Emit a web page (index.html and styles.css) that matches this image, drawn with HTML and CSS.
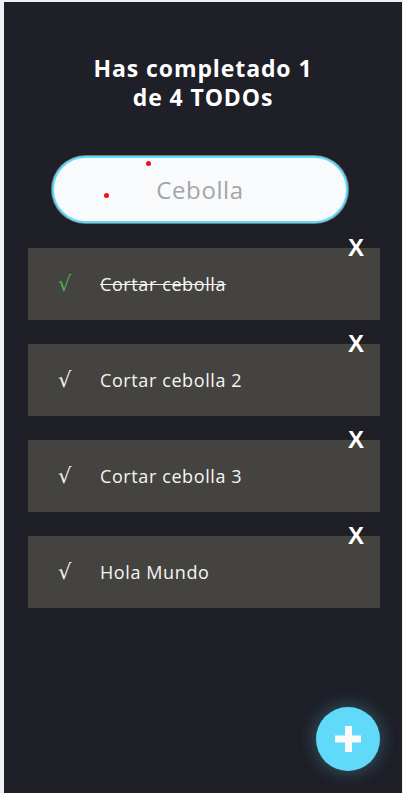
FILE: index.html
```html
<!DOCTYPE html>
<html lang="es">
<head>
<meta charset="utf-8">
<title>TODOs</title>
<link rel="stylesheet" href="styles.css">
</head>
<body>
<div class="app">
  <h1 class="title">Has completado 1<br>de 4 TODOs</h1>
  <div class="search">
    <input class="search-input" placeholder="Cebolla">
    <span class="dot dot-a"></span>
    <span class="dot dot-b"></span>
  </div>
  <ul class="list">
    <li class="item done">
      <span class="check">√</span>
      <p class="text">Cortar cebolla</p>
      <span class="delete">X</span>
    </li>
    <li class="item">
      <span class="check">√</span>
      <p class="text">Cortar cebolla 2</p>
      <span class="delete">X</span>
    </li>
    <li class="item">
      <span class="check">√</span>
      <p class="text">Cortar cebolla 3</p>
      <span class="delete">X</span>
    </li>
    <li class="item">
      <span class="check">√</span>
      <p class="text">Hola Mundo</p>
      <span class="delete">X</span>
    </li>
  </ul>
  <button class="fab" aria-label="Crear TODO">
    <svg width="28" height="28" viewBox="0 0 28 28"><rect x="11" y="1" width="7" height="26" fill="#fafafa"/><rect x="1" y="10.5" width="26" height="7" fill="#fafafa"/></svg>
  </button>
</div>
</body>
</html>
```
FILE: styles.css
```css
html, body {
  margin: 0;
  padding: 0;
  background: #eef0f1;
}
body {
  font-family: "Open Sans", "Noto Sans", sans-serif;
}
.app {
  position: relative;
  margin: 2px 1px 0 4px;
  height: 791px;
  background: #1e1f27;
  overflow: hidden;
}
.title {
  margin: 0;
  padding-top: 52px;
  text-align: center;
  color: #ffffff;
  font-size: 23px;
  line-height: 29px;
  font-weight: 700;
  letter-spacing: 0.9px;
}
.search {
  position: relative;
  margin: 44px 0 0 48px;
  width: 296px;
}
.search-input {
  box-sizing: border-box;
  display: block;
  width: 296px;
  height: 67px;
  border: 2px solid #61dafa;
  border-radius: 34px;
  background: #f8fafc;
  font-family: inherit;
  font-size: 24px;
  letter-spacing: 0.6px;
  text-align: center;
  color: #555;
  outline: none;
  box-shadow: 0 0 0 1px rgba(255,255,255,0.4);
}
.search-input::placeholder {
  color: #a5a5a5;
}
.dot {
  position: absolute;
  width: 5px;
  height: 5px;
  border-radius: 50%;
  background: #e8141a;
}
.dot-a { left: 94px; top: 5px; }
.dot-b { left: 52px; top: 37px; }
.list {
  list-style: none;
  margin: 25px 0 0 24px;
  padding: 0;
  width: 352px;
  display: flex;
  flex-direction: column;
  gap: 24px;
}
.item {
  position: relative;
  display: flex;
  align-items: center;
  height: 72px;
  background: #45433f;
  padding-left: 30px;
  box-sizing: border-box;
}
.check {
  width: 42px;
  color: #f2f2f2;
  font-family: "DejaVu Sans", sans-serif;
  font-size: 21px;
  line-height: 1;
}
.done .check {
  color: #4caf50;
}
.text {
  margin: 0;
  color: #f5f5f5;
  font-size: 18px;
  letter-spacing: 0.6px;
}
.done .text {
  text-decoration: line-through;
}
.delete {
  position: absolute;
  right: 16px;
  top: -12px;
  color: #ffffff;
  font-family: "Liberation Sans", Arial, sans-serif;
  font-weight: 700;
  font-size: 24px;
  line-height: 24px;
}
.fab {
  position: absolute;
  right: 22px;
  bottom: 22px;
  width: 64px;
  height: 64px;
  border: none;
  border-radius: 50%;
  background: #61dafa;
  display: flex;
  align-items: center;
  justify-content: center;
  padding: 0;
  box-shadow: 0 0 18px rgba(97, 218, 250, 0.35);
}
```
